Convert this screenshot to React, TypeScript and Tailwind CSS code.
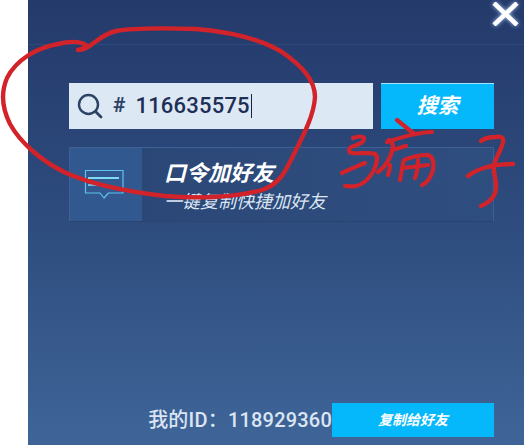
import React from "react";

const cjk = { fontFamily: '"Roboto", "Noto Sans CJK SC", sans-serif' };

function Annotations() {
  return (
    <svg className="absolute left-0 top-0 pointer-events-none" width="524" height="445" viewBox="0 0 524 445" fill="none" stroke="#d3232a" strokeLinecap="round" strokeLinejoin="round">
      <path strokeWidth="4.4" d="M78 50 C83 49 86 47 86 45 C80 41 70 41 58 44 C36 48 16 60 7 78 C1 92 2 108 10 124 C20 142 40 160 64 172 C90 184 130 192 165 196 C200 199 238 197 262 190 C280 184 285 172 293 156 C304 134 314 115 315 97 C315 80 302 66 282 52 C262 40 232 32 196 29 C165 28 132 28 116 31 C103 34 96 42 88 47 C85 49 81 50 78 50" />
      <g strokeWidth="4.2">
        <path d="M353 138 C358 136 363 136 364 138 C365 143 356 145 351 147 C348 150 349 153 352 153 C360 154 370 152 375 154 C379 157 377 163 373 172 C368 180 362 185 356 186 C352 187 348 186 345 186" />
        <path d="M342 173 C348 170 358 166 365 163" />
        <path d="M397 120 C402 124 408 129 413 133" />
        <path d="M387 142 C402 137 418 132 432 132" />
        <path d="M378 172 C385 167 391 158 393 147 C393 144 391 141 389 140" />
        <path d="M392 150 C397 149 402 147 406 146" />
        <path d="M390 165 C390 169 389 172 388 175" />
        <path d="M400 180 C402 172 402 165 404 160 C411 157 420 155 428 155 C434 157 434 164 433 170 C431 177 427 183 422 185" />
        <path d="M418 160 C418 167 417 173 415 178" />
        <path d="M403 168 C411 167 420 166 428 165" />
      </g>
      <g strokeWidth="4.4">
        <path d="M481 141 C485 138 490 137 496 137 C502 136 504 138 503 142 C502 148 499 152 497 157 C493 164 493 170 495 177 C497 186 497 192 493 197 C490 201 486 204 481 206" />
        <path d="M468 176 C473 172 480 169 487 167 C495 165 505 164 513 164" />
      </g>
    </svg>
  );
}

export default function App() {
  return (
    <div className="relative flex h-[445px] w-[524px] overflow-hidden bg-white" style={cjk}>
      <div className="w-[28px] shrink-0 bg-white" />
      <div className="flex flex-1 flex-col bg-gradient-to-b from-[#243a6b] via-[#2e4c7e] to-[#3f6598]">
        <header className="flex h-[45px] shrink-0 justify-end border-b border-[#2f4a78] pr-[4px] pt-[2px]">
          <svg width="28" height="24" viewBox="0 0 28 24" className="drop-shadow-[0_0_2px_#a8c4ee]" stroke="#ffffff" strokeWidth="4.5" fill="none">
            <path d="M2 1 L25 23 M25 1 L2 23" />
          </svg>
        </header>
        <main className="flex flex-1 flex-col pl-[41px] pr-[30px] pt-[38px]">
          <div className="flex h-[46px] gap-[8px]">
            <div className="flex w-[304px] items-center bg-[#dde8f5] pl-[8px]">
              <svg width="28" height="28" viewBox="0 0 28 28" fill="none" stroke="#2c4365" strokeWidth="2.4" strokeLinecap="round" className="shrink-0">
                <circle cx="11.5" cy="12.5" r="9.5" />
                <path d="M18.5 19.5 L24 25" strokeWidth="2.8" />
              </svg>
              <span className="ml-[8px] text-[21px] font-bold text-[#2c4365]">#</span>
              <span className="ml-[10px] text-[22px] font-medium leading-none tracking-[0.2px] text-[#1d2f55]">116635575</span>
              <span className="ml-[1px] h-[24px] w-px bg-[#14233f]" />
            </div>
            <button className="flex w-[113px] items-center justify-center border-t border-[#9fe6ff] bg-[#04b8fb] text-[21px] font-bold italic text-white">
              搜索
            </button>
          </div>
          <div className="mt-[18px] flex h-[75px] border border-[#3d6194] border-b-[#2a4470] bg-gradient-to-r from-[#2a4675] to-[#2f4e80]">
            <div className="flex w-[72px] shrink-0 items-center justify-center bg-[#31588f]">
              <svg width="42" height="32" viewBox="0 0 42 32" fill="none" stroke="#5fc3ee" strokeWidth="1.2" className="ml-[-4px] mt-[1px]">
                <path d="M2.5 1.5 H40 V24 H25.5 L21 29 L17 24 H2.5 Z" strokeLinejoin="round" />
                <path d="M5 9 H36" stroke="#7fdcf6" strokeWidth="2" />
                <path d="M5 16 H22" stroke="#6fb8e0" strokeWidth="2" />
              </svg>
            </div>
            <div className="flex flex-col pl-[22px] pt-[12px]">
              <span className="text-[22px] font-bold italic leading-[28px] text-white">口令加好友</span>
              <span className="mt-[2px] text-[18px] italic leading-[24px] text-[#dbe5f3]">一键复制快捷加好友</span>
            </div>
          </div>
          <div className="mt-auto mb-[8px] flex h-[34px] items-center justify-end">
            <span className="whitespace-nowrap text-[20px] font-medium tracking-[0.2px] text-[#dbe5f3]">我的ID：118929360</span>
            <button className="flex h-full w-[162px] shrink-0 items-center justify-center bg-[#04b8fb] text-[14px] font-bold italic text-white">
              复制给好友
            </button>
          </div>
        </main>
      </div>
      <Annotations />
    </div>
  );
}
